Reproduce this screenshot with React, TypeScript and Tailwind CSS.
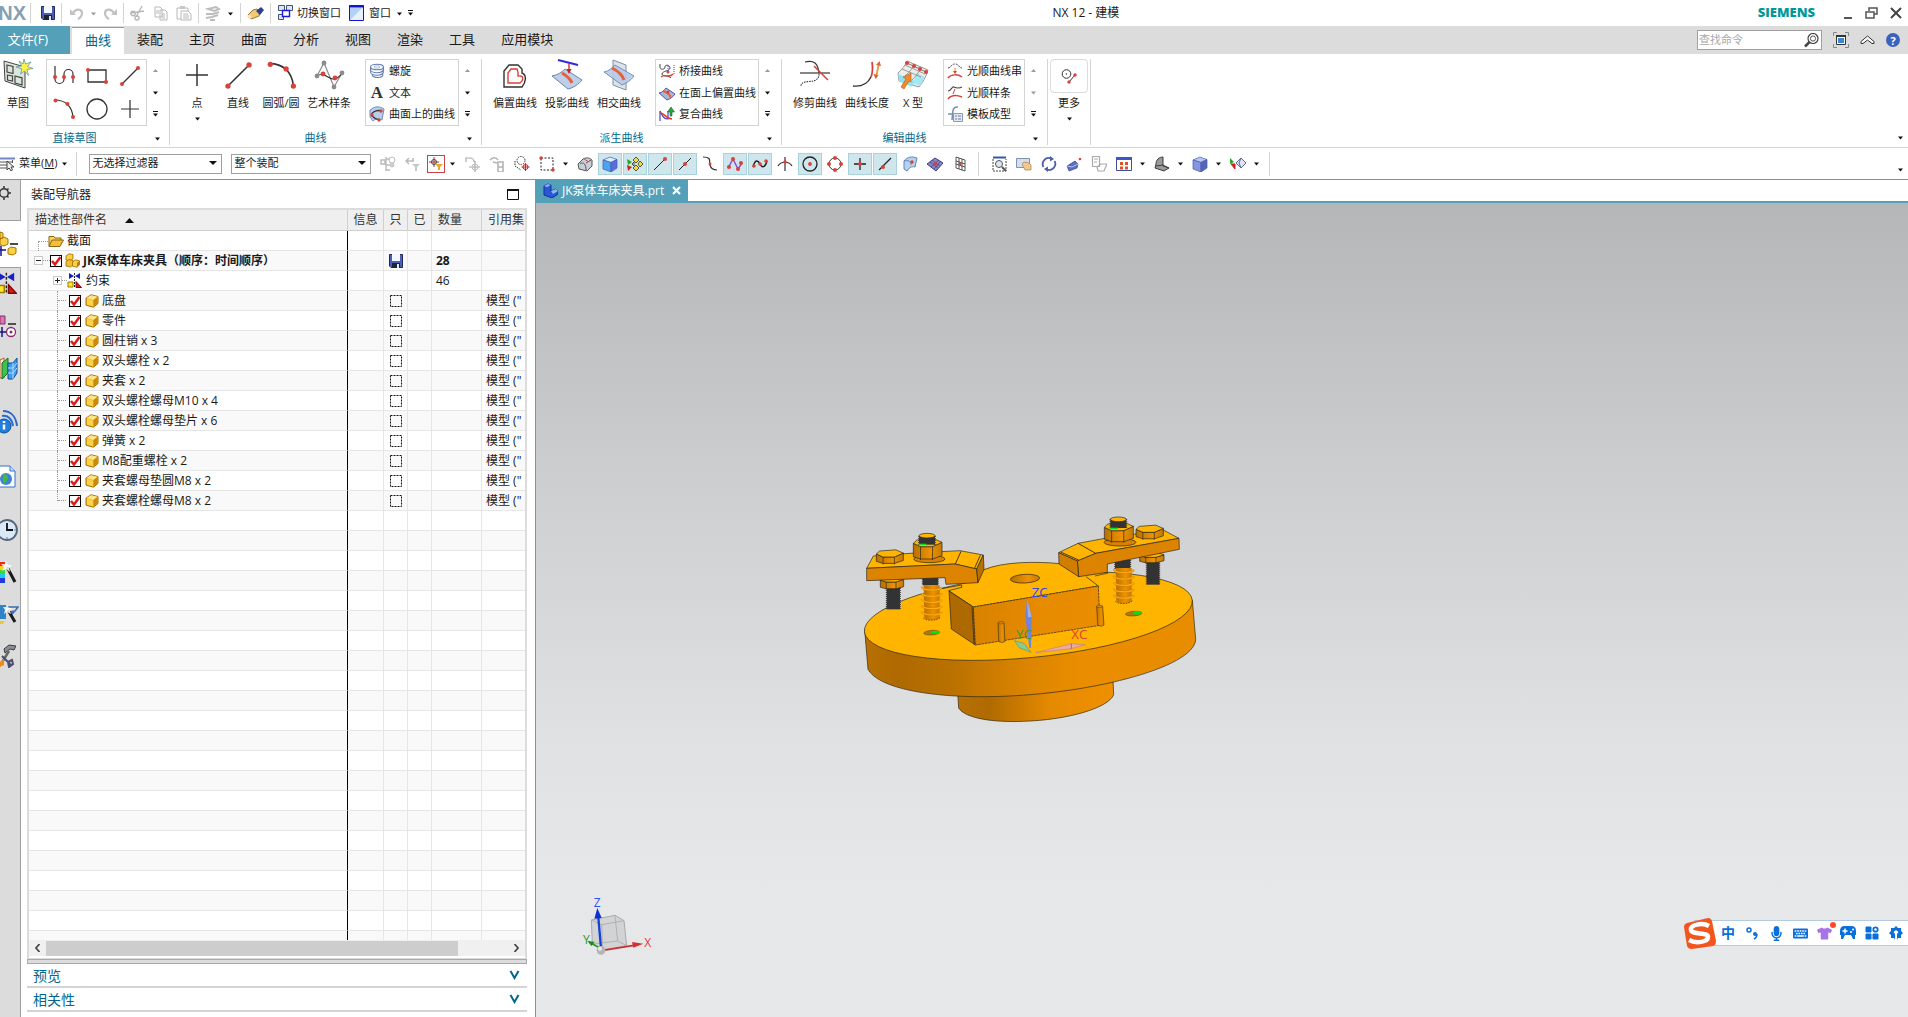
import React from 'react';
import { FaGamepad, FaKeyboard, FaMicrophone, FaTshirt } from 'react-icons/fa';

interface SvgProps {
  w?: number;
  h?: number;
  box?: string;
  className?: string;
  children: React.ReactNode;
}

const Svg: React.FC<SvgProps> = ({ w = 16, h = w, box, className = '', children }) => (
  <svg width={w} height={h} viewBox={box ?? `0 0 ${w} ${h}`} fill="none" className={`shrink-0 ${className}`}>
    {children}
  </svg>
);

const Dot: React.FC<{ x: number; y: number; r?: number; c?: string }> = ({ x, y, r = 2.4, c = '#d9423a' }) => (
  <circle cx={x} cy={y} r={r} fill={c} />
);

const Arrow: React.FC<{ up?: boolean; bar?: boolean; muted?: boolean }> = ({ up, bar, muted }) => (
  <Svg w={7} h={7}>
    {bar && <path d="M1 .5h5" stroke="#111" />}
    <path d={up ? 'M1 5h5L3.500 2z' : 'M1 2.500h5L3.500 5.500z'} fill={muted ? '#9a9a9a' : '#111'} />
  </Svg>
);

const Separator: React.FC<{ className?: string }> = ({ className = 'h-5' }) => (
  <div className={`w-px shrink-0 bg-[#d4d4d4] ${className}`} />
);

/* ---------- shared small drawings ---------- */

const SaveIcon = () => (
  <Svg w={14} h={14}>
    <path d="M.5.5h13v13H2l-1.500-1.500z" fill="#4a5fb4" stroke="#1f2a5c" />
    <path d="M3 0h8v7H3z" fill="#f4f7ff" />
    <path d="M3 9h8v5H3z" fill="#20242e" />
    <path d="M8 10h2v4H8z" fill="#dfe6f5" />
  </Svg>
);

const PartIcon = () => (
  <Svg w={14} h={14}>
    <path d="M1 4 6 .8l7 1.700v7L8.500 13.200l-7.500-2z" fill="#f2b91c" stroke="#a97305" />
    <path d="M1.500 4 6 1.300l6.500 1.500L8.500 6z" fill="#ffe58a" />
    <path d="M8.500 6l4-3v6.200l-4 3.500z" fill="#c98a0a" />
    <path d="M2 5l6 1.500v5.700l-6-1.600z" fill="#fbd24a" />
  </Svg>
);

const AssemblyIcon: React.FC<{ size?: number }> = ({ size = 15 }) => (
  <Svg w={size} box="0 0 15 15">
    <path d="M1 3 4 .8l4 .8v4L5.500 8 1 7z" fill="#fbcf45" stroke="#9c6c05" strokeWidth=".8" />
    <path d="M1 8.500 4 6.500l4 .8v4.500L5.500 14 1 13z" fill="#f5bd28" stroke="#9c6c05" strokeWidth=".8" />
    <path d="M7.500 9l3-2 4 .8v4L12 14.200l-4.500-1z" fill="#fbcf45" stroke="#9c6c05" strokeWidth=".8" />
    <path d="M12 10l2.500-2.200v4L12 14z" fill="#b97c08" />
  </Svg>
);

const ConstraintIcon: React.FC<{ w?: number; h?: number; box?: string }> = ({ w = 15, h = 15, box = '0 0 15 15' }) => (
  <Svg w={w} h={h} box={box}>
    <path d="M2 0l5 3-5 3zM13 0L8 3l5 3z" fill="#1a1ec4" />
    <path d="M7.500 0v15" stroke="#222" strokeDasharray="2 1" />
    <path d="M1 9h5v5H1z" fill="#ffe82e" stroke="#9a7a00" />
    <path d="M9 8.500l5.500 6H9z" fill="#d81818" stroke="#7c0b0b" />
  </Svg>
);

const FolderIcon = () => (
  <Svg w={16} h={14}>
    <path d="M1 12V2.500h5l1 1.500h6v2" fill="#f8d568" stroke="#8a6508" />
    <path d="M1 12.500 4 6h11.500L12 12.500z" fill="#f5be3c" stroke="#8a6508" />
  </Svg>
);

/* ---------- ribbon icons ---------- */

const SketchIcon = () => (
  <Svg w={32}>
    <path d="M2 2l21 6v21L3 22z" fill="#dde6dc" stroke="#444" />
    <path d="M5 6l6 1.500v7L5 13zM5.500 16l5 1v5l-5-1zM13 17l7 1.800V26l-7-2z" stroke="#444" strokeWidth="1.200" />
    <path d="M22 0l1.500 5L29 3l-3.500 4.500 5.500 2-6 1 1.500 6-4-4.500-4 3 1.500-5-6-2 5.500-1L17 2l4 3z" fill="#fff04a" stroke="#5d9ab0" strokeWidth=".8" />
  </Svg>
);

const ProfileIcon = () => (
  <Svg w={22}>
    <path d="M2 1v13a4.500 4.500 0 0 0 9 0V9a4.500 4.500 0 0 1 9 0v9" stroke="#333" strokeWidth="1.200" />
    <Dot x={2} y={12} r={2} /><Dot x={11} y={12} r={2} /><Dot x={20} y={12} r={2} />
  </Svg>
);
const RectIcon = () => (
  <Svg w={24} h={20}>
    <path d="M3 4h18v12H3z" stroke="#333" strokeWidth="1.300" />
    <Dot x={3} y={4} r={2} /><Dot x={21} y={16} r={2} />
  </Svg>
);
const LineIcon: React.FC<{ size?: number }> = ({ size = 22 }) => (
  <Svg w={size} box="0 0 22 22">
    <path d="M3 19L19 3" stroke="#333" strokeWidth="1.200" />
    <Dot x={3} y={19} r={2} /><Dot x={19} y={3} r={2} />
  </Svg>
);
const ArcIcon: React.FC<{ size?: number }> = ({ size = 22 }) => (
  <Svg w={size} box="0 0 22 22">
    <path d="M2 2c10 0 17 6 18 17" stroke="#333" strokeWidth="1.200" />
    <Dot x={2.500} y={2.500} r={2} /><Dot x={14.500} y={6} r={2} /><Dot x={20} y={19} r={2} />
  </Svg>
);
const CircleIcon = () => (
  <Svg w={22}><circle cx="11" cy="11" r="10" stroke="#333" strokeWidth="1.300" /></Svg>
);
const PlusIcon: React.FC<{ size?: number }> = ({ size = 18 }) => (
  <Svg w={size} box="0 0 22 22"><path d="M11 0v22M0 11h22" stroke="#333" strokeWidth="1.500" /></Svg>
);
const SplineIcon = () => (
  <Svg w={32}>
    <path d="M4 17L11 4l10 24 8-14" stroke="#8c8c8c" strokeWidth="1.200" />
    <path d="M4 17c7-5 12 4 17 3s6-3 8-6" stroke="#333" strokeWidth="1.100" />
    <Dot x={4} y={17} c="#8c8c8c" /><Dot x={11} y={4} c="#8c8c8c" /><Dot x={21} y={28} c="#8c8c8c" /><Dot x={29} y={14} c="#8c8c8c" />
    <Dot x={10} y={15} /><Dot x={22} y={19} />
  </Svg>
);
const HelixIcon = () => (
  <Svg>
    <g stroke="#6680b0" strokeWidth="1.100">
      <ellipse cx="8" cy="4" rx="6.500" ry="2.800" /><path d="M1.500 6c0 5 13 5 13 0M1.500 8.500c0 5 13 5 13 0M3 11.500c1 4 11 4 11 0" />
      <path d="M1.500 4v4.500M14.500 4v4.500" />
    </g>
    <ellipse cx="8" cy="4" rx="3" ry="1.200" stroke="#a9bbdc" />
  </Svg>
);
const SurfCurveIcon = () => (
  <Svg>
    <path d="M1 4C6 0 10 0 15 3l-2 11c-4-2-7-1-9 1L1 11z" fill="#b8cdea" stroke="#6f8fc0" />
    <path d="M13 5C6 3 1 8 3 10s4 3 7 4" stroke="#333" strokeWidth="1.300" />
    <Dot x={12} y={5} r={1.700} /><Dot x={3} y={9} r={1.700} /><Dot x={10} y={14} r={1.700} />
  </Svg>
);
const OffsetIcon = () => (
  <Svg w={32}>
    <path d="M5 28V12l5-6h9l4 4v4c5 2 4 9 0 14z" stroke="#333" strokeWidth="1.400" />
    <path d="M9 24V14l3-4h6l1 3v4c6-1 6 4 2 7z" stroke="#d9423a" strokeWidth="1.400" />
  </Svg>
);
const ProjectIcon = () => (
  <Svg w={32}>
    <path d="M1 17c6-1 10-4 13-7l17 11c-3 4-9 8-14 9z" fill="#bdcfe9" stroke="#6d84ad" />
    <path d="M11 14c5 3 8 5 10 10" stroke="#e8603a" strokeWidth="3" />
    <path d="M7 1l20 5" stroke="#2b2be0" strokeWidth="2" />
    <path d="M18 4v8" stroke="#d02020" strokeWidth="1.300" /><path d="M15.500 10h5L18 15z" fill="#d02020" />
  </Svg>
);
const IntersectIcon = () => (
  <Svg w={32}>
    <path d="M10 1l13 5v25l-13-5z" fill="#dde3ea" stroke="#7f8ea5" />
    <path d="M1 13c5-1 8-4 11-7l19 11c-3 4-7 7-12 9z" fill="#b5cbeb" stroke="#6d84ad" opacity=".9" />
    <path d="M9 9c6 3 10 6 12 12" stroke="#e8603a" strokeWidth="3" />
  </Svg>
);
const BridgeIcon = () => (
  <Svg>
    <path d="M1 1v3c0 3 5 3 5 0s5-2 5 1-8 3-8 6 7 1 9 4" stroke="#444" />
    <path d="M2 14c4-4 8 2 12-3" stroke="#d9423a" strokeWidth="1.300" />
    <path d="M9 3v6M15 2v10" stroke="#3b3bd8" strokeDasharray="1 1" /><Dot x={9} y={9} r={1.500} />
  </Svg>
);
const FaceOffsetIcon = () => (
  <Svg>
    <path d="M0 8c3 0 5-3 7-5l9 6c-2 3-5 5-8 6z" fill="#a7b7dc" stroke="#4d5f96" />
    <path d="M4 6c4 1 7 4 8 7" stroke="#e8603a" strokeWidth="2" /><Dot x={9} y={7} r={1.500} />
  </Svg>
);
const CompositeIcon = () => (
  <Svg>
    <path d="M1 15V5c3 6 4 8 8 8V5" stroke="#4444c8" strokeWidth="1.200" />
    <path d="M1 7c5 0 6 6 12 6" stroke="#e03a2a" strokeWidth="1.600" />
    <path d="M11 10V6H8.500L12 1l3.500 5H13v4z" fill="#2fa040" stroke="#14702a" strokeWidth=".6" />
  </Svg>
);
const TrimIcon = () => (
  <Svg w={32}>
    <path d="M6 3c9-2 13 1 14 11" stroke="#333" strokeWidth="1.200" /><path d="M1 14h30" stroke="#333" strokeWidth="1.200" />
    <path d="M20 15c0 8-8 7-14 8-3 1-4 2-4 4" stroke="#333" strokeWidth="1.100" strokeDasharray="1.500 1" />
    <path d="M15 7l14 14" stroke="#d9423a" strokeWidth="1.500" />
  </Svg>
);
const LengthIcon = () => (
  <Svg w={32}>
    <path d="M2 27c9 1 15-3 18-9" stroke="#333" strokeWidth="1.400" /><path d="M20 18c2-5 2-9 1-15" stroke="#d9423a" strokeWidth="1.800" />
    <path d="M28 4l-3 15" stroke="#e79a43" strokeWidth="1.800" />
    <path d="M25 6l3.500-4L30 7zM22.500 15l2 5 3-4z" fill="#d9683a" />
  </Svg>
);
const XFormIcon = () => (
  <Svg w={32}>
    <path d="M1 14C5 10 8 7 10 2l21 9c-2 7-5 12-9 17L2 22z" fill="#ececec" stroke="#999" />
    <path d="M1 15l17 7-3 6L2 22z" fill="#8fe3ee" /><path d="M20 14l8 4-5 9-7-3z" fill="#a6e8f0" />
    <path d="M5 10l19 8M8 6l20 9M17 5c-2 6-6 9-9 12M24 8c-2 6-6 10-9 13" stroke="#888" strokeWidth=".8" />
    <path d="M10 4l19 9" stroke="#777" />
    <Dot x={10} y={4} r={2} /><Dot x={17} y={7} r={2} /><Dot x={23} y={10} r={2} /><Dot x={29} y={13} r={2} />
    <path d="M4 28l5-8-3-2 8-4v9l-2-1-5 8z" fill="#f08a2c" stroke="#b35c12" strokeWidth=".6" />
  </Svg>
);
const SmoothStringIcon = () => (
  <Svg>
    <path d="M1 5c3 0 3-4 7-4s4 4 7 4" stroke="#444" strokeDasharray="2 1" /><path d="M8 5v5" stroke="#e28a2a" /><path d="M6 8h4l-2 3z" fill="#d9423a" />
    <path d="M1 15c3-4 10-4 14-1" stroke="#d9423a" strokeWidth="1.500" />
  </Svg>
);
const SmoothSplineIcon = () => (
  <Svg>
    <path d="M1 6c3 0 4-5 6-4s4 2 8 0" stroke="#444" strokeWidth="1.200" /><path d="M8 4L6 9" stroke="#d9423a" />
    <path d="M1 14c4-5 9-4 14-2" stroke="#d9423a" strokeWidth="1.500" />
  </Svg>
);
const TemplateIcon = () => (
  <Svg>
    <path d="M1 8h7M11 1C5 0 6 6 5 14" stroke="#7b8db0" strokeWidth="1.500" />
    <path d="M6.500 7.500h9v8h-9z" fill="#e4eaf3" stroke="#8a98b2" /><path d="M8 10h2M8 13h2M11 10h3M11 13h3" stroke="#6f7f9e" />
  </Svg>
);
const MoreIcon = () => (
  <Svg w={16}>
    <circle cx="5.500" cy="6" r="4.300" stroke="#333" /><circle cx="5.500" cy="6" r=".7" fill="#333" />
    <path d="M8 14l6-7" stroke="#333" /><Dot x={8} y={14} r={1.700} /><Dot x={14} y={7} r={1.700} />
  </Svg>
);

/* ---------- ribbon structure ---------- */

interface Command {
  label: string;
  icon: React.ReactNode;
  drop?: boolean;
  width?: string;
}

const BigButton: React.FC<Command> = ({ label, icon, drop, width = 'w-[52px]' }) => (
  <button className={`flex shrink-0 flex-col items-center whitespace-nowrap text-[11px] leading-4 ${width}`}>
    <span className="mb-1 flex h-8 items-center">{icon}</span>
    {label}
    {drop && <span className="mt-1"><Arrow /></span>}
  </button>
);

const ScrollArrows: React.FC<{ muted?: boolean }> = ({ muted }) => (
  <div className="flex w-4 flex-col items-center">
    <button aria-label="上翻" className="flex flex-1 items-center"><Arrow up muted /></button>
    <button aria-label="下翻" className="flex flex-1 items-center"><Arrow muted={muted} /></button>
    <button aria-label="展开" className="flex flex-1 items-center"><Arrow bar /></button>
  </div>
);

const ListBox: React.FC<{ items: Command[]; width: string }> = ({ items, width }) => (
  <div className={`ml-2.5 flex shrink-0 flex-col border border-[#d4d4d4] ${width}`}>
    {items.map((item) => (
      <button key={item.label} className="flex flex-1 items-center gap-1 whitespace-nowrap pl-[3px] text-[11px] leading-4">
        {item.icon}
        {item.label}
      </button>
    ))}
  </div>
);

const Group: React.FC<{ title: string; className?: string; children: React.ReactNode }> = ({ title, className = '', children }) => (
  <section className="flex h-[86px] shrink-0 flex-col border-r border-[#d4d4d4]">
    <div className={`flex h-[67px] shrink-0 ${className}`}>{children}</div>
    <div className="mt-1 flex shrink-0 items-center pr-1 text-[11px] leading-4 text-[#00688b]">
      <span className="flex-1 text-center">{title}</span>
      <span className="flex w-4 justify-center"><Arrow /></span>
    </div>
  </section>
);

const Ribbon = () => (
  <div className="flex h-[94px] shrink-0 items-start border-b border-[#d4d4d4] pt-[5px]">
    <Group title="直接草图" className="pr-1.5">
      <BigButton label="草图" icon={<SketchIcon />} width="w-9" />
      <div className="ml-2.5 grid grid-cols-3 border border-[#d4d4d4]">
        {[<ProfileIcon />, <RectIcon />, <LineIcon />, <ArcIcon />, <CircleIcon />, <PlusIcon />].map((icon, i) => (
          <button key={i} className="flex h-8 w-[33px] items-center justify-center">{icon}</button>
        ))}
      </div>
      <ScrollArrows />
    </Group>
    <Group title="曲线" className="pl-[7px] pr-1.5">
      <BigButton label="点" icon={<PlusIcon size={22} />} width="w-10" drop />
      <BigButton label="直线" icon={<LineIcon size={29} />} width="w-[42px]" />
      <BigButton label="圆弧/圆" icon={<ArcIcon size={29} />} width="w-11" />
      <BigButton label="艺术样条" icon={<SplineIcon />} />
      <ListBox
        width="w-[94px]"
        items={[
          { label: '螺旋', icon: <HelixIcon /> },
          { label: '文本', icon: <span className="w-4 text-center font-['Liberation_Serif',serif] text-[17px] font-bold text-[#333]">A</span> },
          { label: '曲面上的曲线', icon: <SurfCurveIcon /> },
        ]}
      />
      <ScrollArrows />
    </Group>
    <Group title="派生曲线" className="pl-[7px] pr-1.5">
      <BigButton label="偏置曲线" icon={<OffsetIcon />} />
      <BigButton label="投影曲线" icon={<ProjectIcon />} />
      <BigButton label="相交曲线" icon={<IntersectIcon />} />
      <ListBox
        width="w-[104px]"
        items={[
          { label: '桥接曲线', icon: <BridgeIcon /> },
          { label: '在面上偏置曲线', icon: <FaceOffsetIcon /> },
          { label: '复合曲线', icon: <CompositeIcon /> },
        ]}
      />
      <ScrollArrows />
    </Group>
    <Group title="编辑曲线" className="pl-[7px] pr-1.5">
      <BigButton label="修剪曲线" icon={<TrimIcon />} />
      <BigButton label="曲线长度" icon={<LengthIcon />} />
      <BigButton label="X 型" icon={<XFormIcon />} width="w-10" />
      <ListBox
        width="w-[82px]"
        items={[
          { label: '光顺曲线串', icon: <SmoothStringIcon /> },
          { label: '光顺样条', icon: <SmoothSplineIcon /> },
          { label: '模板成型', icon: <TemplateIcon /> },
        ]}
      />
      <ScrollArrows muted />
    </Group>
    <div className="flex h-[86px] flex-col items-center border-r border-[#d4d4d4] px-0.5 text-[11px] leading-4">
      <button className="flex flex-col items-center">
        <span className="mb-0.5 flex h-[34px] w-[38px] items-center justify-center rounded border border-[#dcdcdc]"><MoreIcon /></span>
        更多
        <span className="mt-1"><Arrow /></span>
      </button>
    </div>
    <button aria-label="功能区选项" className="ml-auto mr-1 mt-[75px]"><Arrow /></button>
  </div>
);

/* ---------- title and tabs ---------- */

const TitleBar = () => (
  <header className="flex h-[26px] shrink-0 items-center text-[11px]">
    <div className="flex w-[26px] shrink-0 justify-end overflow-hidden font-['Liberation_Sans',sans-serif] text-xl font-bold leading-6 text-[#86a0b4]">NX</div>
    <Separator className="ml-1 h-5" />
    <button aria-label="保存" className="ml-2.5"><SaveIcon /></button>
    <Separator className="ml-1.5 h-5" />
    <button aria-label="撤消" className="ml-2">
      <Svg w={14} h={13}><path d="M0 2v6h6z" fill="#c2c2c2" /><path d="M3 6c3-5 9-4 9 0 0 3-2 5-4 6" stroke="#c2c2c2" strokeWidth="2.200" /></Svg>
    </button>
    <span className="mx-1.5"><Arrow muted /></span>
    <button aria-label="重做">
      <Svg w={14} h={13}><path d="M14 2v6H8z" fill="#c2c2c2" /><path d="M11 6C8 1 2 2 2 6c0 3 2 5 4 6" stroke="#c2c2c2" strokeWidth="2.200" /></Svg>
    </button>
    <Separator className="ml-1.5 h-5" />
    <button aria-label="剪切" className="ml-1.5">
      <Svg>
        <path d="M1 8l13-2M12 1L6 12" stroke="#b8b8b8" strokeWidth="1.400" />
        <circle cx="3" cy="8.500" r="2.200" stroke="#b8b8b8" strokeWidth="1.400" /><circle cx="7" cy="13" r="2" stroke="#b8b8b8" strokeWidth="1.400" />
      </Svg>
    </button>
    <button aria-label="复制" className="ml-2">
      <Svg w={14} h={15}><path d="M1 1h5l2 2v8H1zM6 4h5l2 2v8H6z" fill="#fff" stroke="#b8b8b8" /><path d="M8 8h3M8 10h3M8 12h3M2 5h3M2 7h3" stroke="#b8b8b8" /></Svg>
    </button>
    <button aria-label="粘贴" className="ml-2">
      <Svg w={16} h={16}><path d="M1 3h11v11H1z" stroke="#b8b8b8" /><path d="M4 1h5v3H4z" fill="#c8c8c8" /><path d="M5 6h7l3 3v6H5z" fill="#fff" stroke="#b8b8b8" /><path d="M7 9h5M7 11h6M7 13h6" stroke="#b8b8b8" /></Svg>
    </button>
    <Separator className="ml-1.5 h-5" />
    <button aria-label="重复命令" className="ml-1.5">
      <Svg><path d="M3 4l8-2 3 2-5 2zM1 9h7l6-2M1 13l6-1 6-2M5 15h5" stroke="#bdbdbd" strokeWidth="2" /></Svg>
    </button>
    <span className="mx-1.5"><Arrow /></span>
    <Separator className="h-5" />
    <button aria-label="触控" className="ml-1.5">
      <Svg w={17} h={13}>
        <path d="M1 8l5-5 4-1 3 3-1 4-5 2-3 1z" fill="#efc878" stroke="#9c7530" />
        <path d="M9 4l5-4 3 3-4 5z" fill="#2f3f8f" /><path d="M0 9l3-2 2 4-3 1z" fill="#f7e3b4" />
      </Svg>
    </button>
    <Separator className="ml-1.5 h-5" />
    <button className="ml-1.5 flex items-center gap-1">
      <Svg>
        <path d="M1.500.5h6v5h-6zM9.500.5h6v5h-6zM1.500 9.500h5v5h-5z" fill="#dde6f4" stroke="#44546c" />
        <path d="M5.500 5.500h7v6h-7z" fill="#fff" stroke="#1818f0" strokeWidth="1.400" />
      </Svg>
      切换窗口
    </button>
    <button className="ml-2 flex items-center gap-[5px]">
      <Svg w={15} h={16}>
        <path d="M.5.5h14v15H.5z" fill="#e6f1fc" stroke="#1212dc" /><path d="M14 2L1 15V3h13z" fill="#9cc3ee" opacity=".7" /><path d="M0 1.500h15" stroke="#1212dc" strokeWidth="2" />
      </Svg>
      窗口
      <Arrow />
    </button>
    <button aria-label="更多工具" className="ml-1"><Arrow bar /></button>
    <h1 className="flex-1 text-center text-xs">NX 12 - 建模</h1>
    <div className="font-['Open_Sans',sans-serif] text-[13px] font-extrabold text-[#009999]">SIEMENS</div>
    <div className="ml-7 mr-1.5 flex items-center gap-3">
      <button aria-label="最小化"><Svg w={10} h={12}><path d="M1 11h8" stroke="#555" strokeWidth="2" /></Svg></button>
      <button aria-label="还原"><Svg w={13} h={12}><path d="M4 4V1h8v6H9M1 5h8v6H1z" stroke="#555" strokeWidth="1.500" /></Svg></button>
      <button aria-label="关闭"><Svg w={12}><path d="M1 1l10 10M11 1L1 11" stroke="#444" strokeWidth="2" /></Svg></button>
    </div>
  </header>
);

const tabs = ['装配', '主页', '曲面', '分析', '视图', '渲染', '工具', '应用模块'];

const TabBar = () => (
  <nav className="flex h-7 shrink-0 items-stretch bg-[#dcdcdc] text-[13px]">
    <button className="w-[70px] bg-[#54a0b8] pr-[14px] text-center text-white">文件(F)</button>
    <button className="ml-0.5 mt-px border-t border-[#9a9a9a] bg-white px-[13px] text-[#00688b]">曲线</button>
    {tabs.map((tab) => (
      <button key={tab} className="px-[13px]">{tab}</button>
    ))}
    <div className="ml-auto mr-2 flex items-center gap-[11px]">
      <label className="flex h-5 w-[125px] items-center border border-[#a0a0a0] bg-white pl-px pr-0.5">
        <input aria-label="查找命令" placeholder="查找命令" className="w-0 flex-1 text-[11px] outline-none placeholder:text-[#a8a8a8]" />
        <Svg w={15}>
          <circle cx="9" cy="5.500" r="5" stroke="#444" strokeWidth="1.200" /><circle cx="9" cy="5.500" r="2.600" stroke="#555" />
          <path d="M5.500 9L1 13.500" stroke="#444" strokeWidth="2.500" />
        </Svg>
      </label>
      <button aria-label="全屏">
        <Svg w={16}>
          <path d="M.5 4V.5H4M12 .5h3.500V4M15.500 12v3.500H12M4 15.500H.5V12" stroke="#888" />
          <path d="M3.500 3.500h9v9h-9z" fill="#fff" stroke="#333" /><path d="M3 4h10" stroke="#333" strokeWidth="2" /><path d="M5 6h6v5H5z" fill="#3a86d8" />
        </Svg>
      </button>
      <button aria-label="折叠功能区">
        <Svg w={15} h={12}><path d="M1 9.500v-2L7.500 2 14 7.500v2h-2L7.500 6 3 9.500z" fill="#fff" stroke="#333" /></Svg>
      </button>
      <button aria-label="帮助" className="flex h-[14px] w-[14px] items-center justify-center rounded-full bg-[#3d62bd] text-[11px] font-bold leading-none text-white">?</button>
    </div>
  </nav>
);

/* ---------- selection bar ---------- */

interface Tool {
  icon?: React.ReactNode;
  on?: boolean;
  arrow?: boolean;
  boxed?: boolean;
}

const Cube: React.FC<{ top: string; left: string; right: string }> = ({ top, left, right }) => (
  <Svg>
    <path d="M1 4l7-3 7 2.500-6 3z" fill={top} stroke="#4b5aa8" strokeWidth=".7" />
    <path d="M1 4l8 2.500V16l-8-3z" fill={left} stroke="#4b5aa8" strokeWidth=".7" />
    <path d="M9 6.500l6-3V12l-6 4z" fill={right} stroke="#4b5aa8" strokeWidth=".7" />
  </Svg>
);

const snapTools: Tool[] = [
  { icon: <Svg><path d="M6 1v14M1 4h4v4H1zM6 3h4M6 9h5M6 14h4" stroke="#bbb" strokeWidth="1.400" /><circle cx="12" cy="4" r="3" stroke="#bbb" /><circle cx="12" cy="9" r="2.500" fill="#ccc" /></Svg> },
  { icon: <Svg><path d="M1 5h8M4 2L1 5l3 3M8 5V2" stroke="#bbb" strokeWidth="1.500" /><path d="M7 8h8l-3 3v4h-2v-4z" fill="#c8c8c8" /></Svg> },
  { boxed: true, icon: <Svg w={14}><path d="M5 0v10M0 5h10" stroke="#a03030" /><circle cx="5" cy="5" r="2.500" stroke="#444" /><path d="M6 7h8l-3 3v3H9v-3z" fill="#e8a82a" /></Svg> },
  { arrow: true },
  { icon: <Svg><path d="M2 6V2h4a4 4 0 0 1 4 4M11 5v11M5 11h11" stroke="#aaa" strokeWidth="1.200" /><circle cx="11" cy="11" r="3" stroke="#bbb" /></Svg> },
  { icon: <Svg><path d="M1 4c3-3 6-3 8 0M4 6l4 1M9 6h5v10H9zM9 11h5" stroke="#b4b4b4" strokeWidth="1.600" /></Svg> },
  { icon: <Svg><circle cx="7" cy="4.500" r="4" stroke="#333" strokeDasharray="1.500 1" /><path d="M1 5v5l6 4" stroke="#333" strokeDasharray="1.500 1" /><path d="M11.500 7v8M7.500 11h8" stroke="#c22" /><circle cx="11.500" cy="11" r="2.500" stroke="#c22" /></Svg> },
  { icon: <Svg><path d="M2 2h12v12H2z" stroke="#222" strokeDasharray="2 1.500" /><Dot x={2} y={2} r={1.700} /><Dot x={14} y={14} r={1.700} /></Svg> },
  { arrow: true },
  { icon: <Svg><path d="M1 8l5-5c4-2 7-1 9 1v6l-5 5-8-2z" fill="#c9ced8" stroke="#555" /><path d="M3 8c4-3 6 1 6 6M9 7l5-3" stroke="#555" /><path d="M7 3l5 3" stroke="#d55" /></Svg> },
  { on: true, icon: <Cube top="#d8f0ff" left="#4aa4f0" right="#5a6ee0" /> },
  { on: true, icon: <Svg><path d="M0 3l5 3-4 3z" fill="#2a2" /><path d="M0 9l5 2-4 4z" fill="#c22" /><path d="M9 1l3 3-3 3-3-3zM9 9l3 3-3 3-3-3zM5 8l2-2v4zM13 5l3 3-3 3-2-3z" fill="#f2dc3c" stroke="#333" strokeWidth=".8" /></Svg> },
  { on: true, icon: <Svg><path d="M2 14L13 3" stroke="#222" /><Dot x={13} y={3} r={2} /></Svg> },
  { on: true, icon: <Svg><path d="M2 14L14 2" stroke="#222" /><Dot x={8} y={8} r={2} /></Svg> },
  { icon: <Svg><path d="M1 1c9 0 6 4 7 8s3 5 7 5" stroke="#333" strokeWidth="1.200" /><Dot x={8} y={8} r={1.500} /></Svg> },
  { on: true, icon: <Svg><path d="M1 12L6 3l5 10 4-6" stroke="#8a4bd0" strokeWidth="1.500" /><Dot x={2} y={11} r={2} /><Dot x={6} y={3} r={2} /><Dot x={11} y={13} r={2} /><Dot x={14} y={7} r={2} /></Svg> },
  { on: true, icon: <Svg><path d="M1 11C3 3 6 4 8 8s5 4 7-3" stroke="#222" strokeWidth="1.500" /><Dot x={2} y={10} r={1.800} /><Dot x={8} y={8} r={1.800} /><Dot x={14} y={5} r={1.800} /></Svg> },
  { icon: <Svg><path d="M8 1v14M1 10c3-5 11-5 14 0" stroke="#333" strokeWidth="1.200" /><Dot x={8} y={6} r={1.800} /></Svg> },
  { on: true, icon: <Svg><circle cx="8" cy="8" r="7" stroke="#222" strokeWidth="1.300" /><Dot x={8} y={8} r={1.900} /></Svg> },
  { icon: <Svg><circle cx="8" cy="8" r="6" stroke="#333" /><Dot x={8} y={2} r={2} /><Dot x={8} y={14} r={2} /><Dot x={2} y={8} r={2} /><Dot x={14} y={8} r={2} /></Svg> },
  { on: true, icon: <Svg><path d="M8 2v12M2 8h12" stroke="#222" strokeWidth="1.300" /><Dot x={8} y={8} r={1.900} /></Svg> },
  { on: true, icon: <Svg><path d="M2 14L14 2" stroke="#222" strokeWidth="1.200" /><Dot x={6} y={11} r={2} /></Svg> },
  { icon: <Svg><path d="M2 5c3-4 8-5 13-3l-2 9c-4-1-6 1-8 4L2 13z" fill="#b6d2ef" stroke="#5f83b8" /><path d="M2 5c4-1 7 0 7 4" stroke="#5f83b8" /><Dot x={10} y={6} r={1.700} /></Svg> },
  { icon: <Svg><path d="M0 8l8-6 8 5-7 8z" fill="#8a86c4" stroke="#443f80" /><path d="M3 6l8 6M5 4l8 6M4 11l8-7M7 13l7-8" stroke="#443f80" strokeWidth=".7" /><Dot x={8} y={8} r={1.800} /></Svg> },
  { icon: <Svg><path d="M4 1l9 3v11l-9-3zM7 2v11M10 3v11M4 5l9 3M4 8l9 3" stroke="#444" strokeWidth=".9" /><Dot x={8} y={8} r={1.500} /></Svg> },
];

const viewTools: Tool[] = [
  { icon: <Svg><path d="M2 1.500h13" stroke="#3b56a8" strokeWidth="2" /><path d="M2 3v12h13V3" stroke="#444" strokeDasharray="2 1" /><circle cx="8" cy="8" r="3.500" fill="#dfe8f2" stroke="#555" /><path d="M11 11l4 4" stroke="#555" strokeWidth="2" /></Svg> },
  { icon: <Svg><path d="M.5 2.500h13v9H.5z" fill="#d7deeb" stroke="#8290b0" /><path d="M6 8l2-2 5 1 2 2v5H9z" fill="#f0c896" stroke="#a87c48" strokeWidth=".7" /></Svg> },
  { icon: <Svg><path d="M2.500 11A6 6 0 0 1 10 2.500M13.500 5A6 6 0 0 1 6 13.500" stroke="#4c5fa8" strokeWidth="1.800" /><path d="M9 0l4 3-4 2.500zM7 10.500L3 13l4 3z" fill="#4c5fa8" /></Svg> },
  { icon: <Svg><path d="M1 10l8-5 3 3-1 4-8 3z" fill="#5b6fc4" stroke="#34448c" strokeWidth=".7" /><path d="M1 10l5 1 6-3" stroke="#b5c0ee" /><Dot x={14} y={3} r={1.300} /></Svg> },
  { icon: <Svg><path d="M1.500.5h7v10h-7zM3 3h4M3 6h3M6 11l4-3h6l-3 7H7z" stroke="#aaa" strokeWidth="1.200" /></Svg> },
  { icon: <Svg><path d="M.5 1.500h15v13H.5z" fill="#fff" stroke="#3b4f9c" /><path d="M0 2.500h16" stroke="#3b56c8" strokeWidth="3" /><path d="M4 6h3v3H4zM9 6h3v3H9zM4 10.500h3v3H4zM9 10.500h3v3H9z" fill="#e0512e" /></Svg> },
  { arrow: true },
  { icon: <Svg><path d="M2 8c0-4 3-7 7-7v9l6 2-5 3-9-3z" fill="#9a9a9a" stroke="#3c3c3c" /><path d="M2 10l7-1 6 3" stroke="#3c3c3c" /></Svg> },
  { arrow: true },
  { icon: <Cube top="#b9c6f4" left="#8396e2" right="#5266bc" /> },
  { arrow: true },
  { icon: <Svg><path d="M0 2l4 4-4 2z" fill="#2a2" /><path d="M1 8h4v5z" fill="#c22" stroke="#c22" /><path d="M11 2l5 5-5 5-5-5z" fill="#dfe4f2" stroke="#5b6a98" /><path d="M11 2l-2 5 2 5" stroke="#5b6a98" /></Svg> },
  { arrow: true },
];

const ToolRow: React.FC<{ items: Tool[] }> = ({ items }) => (
  <div className="flex items-center">
    {items.map((tool, i) => {
      if (tool.arrow) return <button key={i} aria-label="选项" className="flex w-[13px] justify-center"><Arrow /></button>;
      if (tool.boxed) return <button key={i} className="flex h-4 w-[21px] items-center justify-center"><span className="border border-[#c8404a] p-px">{tool.icon}</span></button>;
      return (
        <button key={i} className="flex w-[25px] justify-center">
          <span className={tool.on ? 'flex h-[22px] w-6 items-center justify-center border border-[#a9d3dc] bg-[#cfe7ec]' : 'flex h-[22px] w-6 items-center justify-center'}>{tool.icon}</span>
        </button>
      );
    })}
  </div>
);

const Picker: React.FC<{ label: string; width: string }> = ({ label, width }) => (
  <div className={`grid h-5 shrink-0 items-center ${width}`}>
    <select aria-label={label} className="col-start-1 row-start-1 h-5 w-full appearance-none border border-[#a0a0a0] bg-white pl-0.5 text-[11px] outline-none">
      <option>{label}</option>
    </select>
    <Svg w={8} h={5} className="pointer-events-none col-start-1 row-start-1 mr-[5px] justify-self-end"><path d="M0 0h8L4 4z" fill="#111" /></Svg>
  </div>
);

const SelectionBar = () => (
  <div className="flex h-8 shrink-0 items-center border-b border-[#8a9092] text-[11px]">
    <button className="flex items-center gap-1">
      <Svg w={15} h={14}>
        <path d="M0 1.500h15" stroke="#6f86c8" strokeWidth="2" /><path d="M0 5h12M0 8h7M0 11h7M12.500 3v3" stroke="#555" />
        <path d="M7 4v9l2-2 2 3 1.500-1-1.500-3h3z" fill="#eee" stroke="#444" />
      </Svg>
      <span>菜单(<u>M</u>)</span>
      <Arrow />
    </button>
    <Separator className="ml-2 mr-3 h-6" />
    <Picker label="无选择过滤器" width="w-[133px]" />
    <div className="ml-[9px] mr-1 flex"><Picker label="整个装配" width="w-[140px]" /></div>
    <ToolRow items={snapTools} />
    <Separator className="ml-1.5 mr-[7px] h-6" />
    <ToolRow items={viewTools} />
    <Separator className="ml-1.5 h-6" />
    <button aria-label="工具条选项" className="ml-auto mr-1 self-end pb-1.5"><Arrow /></button>
  </div>
);

/* ---------- resource rail ---------- */

const Rail = () => (
  <aside className="flex w-[21px] shrink-0 flex-col bg-[#dcdcdc]">
    <button aria-label="设置" className="flex h-[41px] items-center border-b border-r border-[#a0a0a0] pb-[14px]">
      <Svg w={11} h={14}><circle cx="4" cy="7" r="4.300" stroke="#333" strokeWidth="1.500" /><path d="M4 0v2M4 12v2M8.500 2.500L7 4M8.500 11.500L7 10M9 7h2" stroke="#333" strokeWidth="1.500" /></Svg>
    </button>
    <button aria-label="装配导航器" className="flex h-[46px] items-center bg-white">
      <Svg w={19} h={26}>
        <path d="M0 1l3 1v5l-3 1zM0 8l4-2 4 2v5l-4 2-4-1z" fill="#fbcf45" stroke="#a97305" /><path d="M10 13h8" stroke="#111" strokeWidth="1.500" /><path d="M0 19h6M1 15v10" stroke="#14148c" strokeWidth="1.500" />
        <path d="M8 18l3-2 5 1v5l-3 2-5-1z" fill="#fbcf45" stroke="#a97305" />
      </Svg>
    </button>
    <div className="flex flex-1 flex-col border-r border-t border-[#a0a0a0]">
      <button aria-label="约束导航器" className="flex h-8 items-center"><ConstraintIcon w={17} h={24} box="3 0 12 16" /></button>
      <button aria-label="部件导航器" className="mt-2.5 flex h-8 items-center">
        <Svg w={17} h={24}>
          <path d="M0 2h5v8H0z" fill="#d67ab4" stroke="#8c2a6c" /><path d="M8 10h8" stroke="#222" strokeWidth="1.500" /><path d="M0 18h6M2 13v10" stroke="#14148c" strokeWidth="1.500" />
          <circle cx="11" cy="18" r="4.500" fill="#fff" stroke="#8c2a6c" strokeWidth="1.300" /><circle cx="11" cy="18" r="1.500" fill="#8c2a6c" />
        </Svg>
      </button>
      <button aria-label="重用库" className="mt-2.5 flex h-8 items-center">
        <Svg w={18} h={23}>
          <path d="M0 3l4-2v20H0z" fill="#f6f0e2" stroke="#c05a1c" /><path d="M2 6l6-5v15l-6 6z" fill="#3fc24c" stroke="#17702a" /><path d="M8 6h5l4-5v15l-4 6H8z" fill="#3c9cf0" stroke="#124d94" /><path d="M8 11h5l4-5M8 16h5l4-5M13 6v16" stroke="#b4dcff" />
        </Svg>
      </button>
      <button aria-label="HD3D 工具" className="mt-[22px] flex h-8 items-center">
        <Svg w={18} h={24}>
          <circle cx="4" cy="16" r="7" fill="#1f7fdc" stroke="#0c4ea0" /><path d="M4 11v2M4 14.500v5" stroke="#fff" strokeWidth="2.500" />
          <path d="M2 6c6-1 10 3 11 10M3 1c8 0 13 6 14 15" stroke="#2c6ac8" strokeWidth="2" />
        </Svg>
      </button>
      <button aria-label="Web 浏览器" className="mt-[22px] flex h-8 items-center">
        <Svg w={16} h={23}><path d="M-2 1h12l5 5v16H-2z" fill="#fff" stroke="#3272c8" /><path d="M10 1v5h5" fill="#cfe0f6" stroke="#3272c8" /><circle cx="6" cy="14" r="6" fill="#3c82d8" /><path d="M4 9c4 1 5 3 3 6l-2 4c-3-3-3-7-1-10z" fill="#48b83c" /></Svg>
      </button>
      <button aria-label="历史记录" className="mt-[22px] flex h-8 items-center">
        <Svg w={18} h={22}><circle cx="7" cy="11" r="10" fill="#dbe8f8" stroke="#55657c" strokeWidth="1.800" /><path d="M7 4v7h6" stroke="#111" strokeWidth="1.800" /><path d="M7 18.500v1M14.500 11h1" stroke="#111" /></Svg>
      </button>
      <button aria-label="系统材料" className="mt-2.5 flex h-8 items-center">
        <Svg w={17} h={22}><path d="M0 1h5v4H0z" fill="#f02a1a" /><path d="M0 5h5v4H0z" fill="#f8d21a" /><path d="M0 9h5v4H0z" fill="#38d838" /><path d="M0 13h5v4H0z" fill="#22c8e8" /><path d="M0 17h5v5H0z" fill="#2238e0" /><path d="M7 6l8 15" stroke="#1a1a1a" strokeWidth="3" /><path d="M6 0l2 4 4 0-3 3 1 4-4-3-4 2 2-4-3-3h4z" fill="#fff" opacity=".85" /></Svg>
      </button>
      <button aria-label="流程模板" className="mt-2.5 flex h-8 items-center">
        <Svg w={19} h={22}><path d="M0 2h6v14H0z" fill="#2f84c8" /><path d="M6 4h12l-3 4-6 1h5l-4 4" stroke="#3c6cb4" strokeWidth="1.500" /><path d="M8 7l7 12" stroke="#1a1a1a" strokeWidth="3" /><path d="M7 2l2 3 3 0-2 3 1 3-4-2-3 2 1-4-2-3h3z" fill="#fff" opacity=".85" /><path d="M0 18h5l-2 3H0z" fill="#f0c82a" /></Svg>
      </button>
      <button aria-label="角色" className="mt-2.5 flex h-8 items-center">
        <Svg w={16} h={24}><path d="M4 5l5-4 7 1-2 4-4-1-5 4z" fill="#8a8f96" stroke="#3c3c3c" /><path d="M9 7L1 20" stroke="#666" strokeWidth="2.500" /><path d="M2 12l9 9M8 18l4-2 1 4-4 3z" stroke="#4a4f70" strokeWidth="2" /><path d="M0 18l4-3v6l-4 2z" fill="#f08a1a" /></Svg>
      </button>
    </div>
  </aside>
);

/* ---------- assembly navigator ---------- */

const parts = [
  '底盘', '零件', '圆柱销 x 3', '双头螺栓 x 2', '夹套 x 2', '双头螺栓螺母M10 x 4', '双头螺栓螺母垫片 x 6',
  '弹簧 x 2', 'M8配重螺栓 x 2', '夹套螺母垫圆M8 x 2', '夹套螺栓螺母M8 x 2',
];

const Check: React.FC<{ name: string }> = ({ name }) => (
  <label className="grid h-3 w-3 shrink-0 place-items-center">
    <input type="checkbox" aria-label={name} defaultChecked className="col-start-1 row-start-1 h-3 w-3 appearance-none border border-black bg-white" />
    <Svg w={12} className="pointer-events-none col-start-1 row-start-1"><path d="M2 6l3 3.500L10.500 2" stroke="#e01818" strokeWidth="2.500" /></Svg>
  </label>
);

const Expander: React.FC<{ open?: boolean }> = ({ open }) => (
  <button aria-label={open ? '折叠' : '展开'} className="flex h-[9px] w-[9px] shrink-0 items-center justify-center border border-[#c8c8c8] bg-white">
    <Svg w={5}><path d={open ? 'M0 2.500h5' : 'M0 2.500h5M2.500 0v5'} stroke="#222" /></Svg>
  </button>
);

const cell = 'border-b border-r border-[#e6e6e6]';

const Row: React.FC<{ name?: React.ReactNode; only?: React.ReactNode; count?: React.ReactNode; refSet?: string }> = ({ name, only, count, refSet }) => (
  <tr className="h-5 odd:bg-white even:bg-[#f9f9f9]">
    <td className="border-b border-r border-b-[#e6e6e6] border-r-black"><div className="flex h-[19px] items-center whitespace-nowrap">{name}</div></td>
    <td className={cell} />
    <td className={cell}><div className="flex justify-center">{only}</div></td>
    <td className={cell} />
    <td className={`pl-1 ${cell}`}>{count}</td>
    <td className="overflow-hidden whitespace-nowrap border-b border-[#e6e6e6] pl-1">{refSet}</td>
  </tr>
);

const NavigatorTable = () => (
  <table className="w-full table-fixed border-separate border-spacing-0 text-xs leading-[18px]">
    <colgroup>
      <col /><col className="w-9" /><col className="w-6" /><col className="w-6" /><col className="w-[50px]" /><col className="w-[43px]" />
    </colgroup>
    <thead>
      <tr className="h-[21px] bg-[#efefef] text-left text-[#333] [&>th]:border-b [&>th]:border-r [&>th]:border-[#cfcfcf] [&>th]:font-normal">
        <th><span className="flex items-center gap-[18px] pl-1.5">描述性部件名 <Svg w={9} h={5}><path d="M0 5h9L4.500 0z" fill="#111" /></Svg></span></th>
        <th className="text-center!">信息</th>
        <th className="text-center!">只</th>
        <th className="text-center!">已</th>
        <th className="pl-1.5">数量</th>
        <th className="overflow-hidden whitespace-nowrap border-r-0! pl-1.5">引用集</th>
      </tr>
    </thead>
    <tbody>
      <Row name={<><span className="ml-[9px] mt-2.5 h-2.5 w-2.5 border-l border-t border-dotted border-[#999]" /><FolderIcon /><span className="ml-[3px]">截面</span></>} />
      <Row
        name={
          <>
            <span className="ml-[5px] flex"><Expander open /></span>
            <span className="w-[7px] border-t border-dotted border-[#999]" />
            <Check name="JK泵体车床夹具" />
            <span className="mx-[3px]"><AssemblyIcon /></span>
            <b>JK泵体车床夹具（顺序：时间顺序）</b>
          </>
        }
        only={<SaveIcon />}
        count={<b>28</b>}
      />
      <Row
        name={
          <>
            <span className="ml-6 flex"><Expander /></span>
            <span className="w-[5px] border-t border-dotted border-[#999]" />
            <ConstraintIcon />
            <span className="ml-1">约束</span>
          </>
        }
        count="46"
      />
      {parts.map((part, i) => (
        <Row
          key={part}
          name={
            <>
              <span className={`ml-7 w-px border-l border-dotted border-[#999] ${i === parts.length - 1 ? 'h-2.5 self-start' : 'h-5'}`} />
              <span className="mr-[3px] w-2 border-t border-dotted border-[#999]" />
              <Check name={part} />
              <span className="ml-1 mr-[3px]"><PartIcon /></span>
              {part}
            </>
          }
          only={
            <Svg w={12}><path d="M.5.5h11v11H.5z" stroke="#111" strokeDasharray="2 1" /></Svg>
          }
          refSet={'模型 ("'}
        />
      ))}
      {Array.from({ length: 22 }, (_, i) => <Row key={i} />)}
    </tbody>
  </table>
);

const Fold: React.FC<{ title: string }> = ({ title }) => (
  <button className="flex h-6 w-full shrink-0 items-center justify-between border-b-2 border-[#d4d4d4] pl-1.5 pr-[7px] text-sm leading-5 text-[#00688b]">
    <span className="pt-0.5">{title}</span>
    <Svg w={11} h={10}><path d="M1.500 1L5.500 8l4-7" stroke="#00688b" strokeWidth="2" /></Svg>
  </button>
);

const Navigator = () => (
  <section className="flex w-[515px] shrink-0 flex-col border-r border-[#8a9092] pl-1.5 pr-2">
    <div className="flex h-7 shrink-0 items-center justify-between pl-1 pr-2 pt-px text-xs">
      <h2>装配导航器</h2>
      <button aria-label="最大化"><Svg w={12} h={11}><path d="M.5.5h11v10H.5z" stroke="#111" /><path d="M0 1h12" stroke="#111" strokeWidth="2" /></Svg></button>
    </div>
    <div className="flex min-h-0 flex-1 flex-col border-2 border-b border-[#dcdcdc] pb-0.5">
      <div className="min-h-0 flex-1 overflow-hidden"><NavigatorTable /></div>
      <div className="flex h-4 shrink-0 items-center bg-[#f0f0f0]">
        <button aria-label="向左" className="flex w-[17px] justify-center"><Svg w={7} h={8}><path d="M5.500 0L2 4l3.500 4" stroke="#444" strokeWidth="1.700" /></Svg></button>
        <div className="h-[15px] w-[412px] bg-[#cdcdcd]" />
        <button aria-label="向右" className="ml-auto flex w-[17px] justify-center"><Svg w={7} h={8}><path d="M1.500 0L5 4 1.500 8" stroke="#444" strokeWidth="1.700" /></Svg></button>
      </div>
    </div>
    <div className="h-[5px] shrink-0 border border-[#a8a8a8] bg-[#dcdcdc]" />
    <Fold title="预览" />
    <Fold title="相关性" />
    <div className="h-[5px] shrink-0" />
  </section>
);

/* ---------- 3D model ---------- */

const Bolt: React.FC<{ x: number; y: number; w: number; h: number }> = ({ x, y, w, h }) => (
  <g>
    <rect x={x} y={y} width={w} height={h} fill="#333" />
    <path d={`M${x} ${y + 2}v${h - 2}M${x + w} ${y + 2}v${h - 2}`} stroke="#3a3a3a" strokeWidth="5" strokeDasharray="3 3" />
  </g>
);

const Hex: React.FC<{ x: number; y: number; w: number; h: number; top: number }> = ({ x, y, w, h, top }) => (
  <g stroke="#222" strokeWidth="2" strokeLinejoin="round">
    <path d={`M${x} ${y}l${w * 0.25} ${top}h${w * 0.42}L${x + w} ${y - top * 0.3}v${h}l${-w * 0.33} ${top}h${-w * 0.42}L${x} ${y + h}z`} fill="url(#nut)" />
    <path d={`M${x} ${y}l${w * 0.12} ${-top}l${w * 0.6} ${-top * 0.4}L${x + w} ${y - top * 0.3}l${-w * 0.33} ${top * 1.3}h${-w * 0.42}z`} fill="#ffb400" />
    <path d={`M${x + w * 0.25} ${y + top}v${h}M${x + w * 0.67} ${y + top}v${h}`} />
  </g>
);

const Spring: React.FC<{ x: number; y: number; h: number }> = ({ x, y, h }) => (
  <g>
    <path d={`M${x} ${y}h48v${h}c-10 8-38 8-46 0z`} fill="url(#nut)" />
    {[0, 1, 2, 3, 4].map((i) => {
      const cy = y + 4 + (i * (h - 14)) / 4.500;
      return (
        <g key={i}>
          <path d={`M${x - 5} ${cy}c0 12 50 14 60 2`} stroke="#c47a00" strokeWidth="6" />
          <path d={`M${x - 5} ${cy}c0 12 50 14 60 2`} stroke="#ffab10" strokeWidth="4" />
        </g>
      );
    })}
    <path d={`M${x - 1} ${y + h}c8 9 42 9 52-3`} stroke="#222" strokeWidth="2" strokeDasharray="5 3" />
  </g>
);

const Fixture = () => (
  <svg width="360" height="240" viewBox="0 0 1080 720" fill="none" className="absolute left-[314px] top-[297px]">
    <defs>
      <linearGradient id="side" gradientUnits="userSpaceOnUse" x1="44" y1="0" x2="1036" y2="0">
        <stop offset="0" stopColor="#b87000" /><stop offset=".1" stopColor="#ae6900" /><stop offset=".25" stopColor="#b87000" />
        <stop offset=".5" stopColor="#dd8500" /><stop offset=".65" stopColor="#ea8d00" /><stop offset="1" stopColor="#e88c00" />
      </linearGradient>
      <linearGradient id="hub" gradientUnits="userSpaceOnUse" x1="323" y1="0" x2="791" y2="0">
        <stop offset="0" stopColor="#b87000" /><stop offset=".2" stopColor="#b06a00" /><stop offset=".6" stopColor="#e68a00" /><stop offset="1" stopColor="#ee9000" />
      </linearGradient>
      <linearGradient id="front" x1="0" x2="1"><stop stopColor="#d88200" /><stop offset=".5" stopColor="#e68a00" /><stop offset="1" stopColor="#ea8d00" /></linearGradient>
      <linearGradient id="nut" x1="0" x2="1"><stop stopColor="#b87000" /><stop offset=".6" stopColor="#ee9200" /><stop offset="1" stopColor="#c67a00" /></linearGradient>
    </defs>
    <g stroke="#2a2416" strokeWidth="2">
      <path d="M323 580L326 624C345 655 430 668 520 664C650 660 775 625 791 584L789 540z" fill="url(#hub)" />
      <path d="M44 390L54 508C85 565 240 592 410 590C700 588 1035 505 1037 418L1027 300z" fill="url(#side)" />
      <ellipse cx="535" cy="348" rx="494" ry="125" transform="rotate(-5.500 535 348)" fill="#ffb400" />
    </g>
    <path d="M296 272L335 262L400 208C460 184 560 184 625 190L708 230L745 258L370 321z" fill="#ffb400" />
    <path d="M400 210C460 184 560 184 630 191M335 262L296 272L370 321L745 258L708 230M275 266L335 255V264M735 228L775 219" stroke="#222" strokeWidth="2" />
    <path d="M297 273L370 321L376 435L304 387z" fill="#ae6900" stroke="#222" strokeWidth="2" />
    <path d="M370 321L745 258L750 376L376 435z" fill="url(#front)" stroke="#222" strokeWidth="2" strokeDasharray="8 2" />
    <path d="M366 321L372 433" stroke="#222" strokeWidth="2" />
    <ellipse cx="525" cy="236" rx="44" ry="13" transform="rotate(-3 525 236)" fill="url(#nut)" stroke="#222" strokeWidth="2" />
    <path d="M444 368h18l3 56c-6 5-14 4-19 0z" fill="url(#nut)" stroke="#222" strokeWidth="1.500" /><ellipse cx="453" cy="368" rx="9" ry="4" fill="#d88300" stroke="#222" />
    <path d="M740 319h18l4 56c-6 5-14 4-19 0z" fill="url(#nut)" stroke="#222" strokeWidth="1.500" /><ellipse cx="749" cy="319" rx="9" ry="4" fill="#d88300" stroke="#222" />
    <ellipse cx="245" cy="398" rx="24" ry="7" transform="rotate(-4 245 398)" fill="#a87a10" stroke="#222" /><ellipse cx="256" cy="397" rx="13" ry="5" fill="#0be010" />
    <ellipse cx="851" cy="341" rx="25" ry="7" transform="rotate(-4 851 341)" fill="#a87a10" stroke="#222" /><ellipse cx="862" cy="339" rx="13" ry="5" fill="#0be010" />

    {/* left clamp */}
    <Bolt x={110} y={256} w={40} h={72} />
    <Hex x={91} y={240} w={70} h={22} top={6} />
    <Bolt x={218} y={230} w={46} h={26} />
    <Spring x={221} y={256} h={98} />
    <path d="M50 205L70 168L180 160L330 152L400 165L380 207L315 192z" fill="#ffb400" stroke="#222" strokeWidth="2" />
    <path d="M50 205L315 192L380 207L384 248L288 253L285 233L50 242z" fill="#dc8400" stroke="#222" strokeWidth="2" />
    <path d="M380 207L400 165L402 208L384 248z" fill="#b87000" stroke="#222" strokeWidth="2" />
    <path d="M333 154L316 192M391 166L374 204" stroke="#222" strokeWidth="2.500" />
    <Hex x={79} y={162} w={81} h={22} top={9} />
    <ellipse cx="238" cy="177" rx="47" ry="11" fill="#d88300" stroke="#222" strokeWidth="2" />
    <Hex x={190} y={130} w={86} h={40} top={10} />
    <Bolt x={207} y={106} w={48} h={28} />
    <ellipse cx="231" cy="107" rx="24" ry="7" fill="#ffb400" stroke="#222" strokeWidth="2" /><path d="M207 133h22" stroke="#0be010" strokeWidth="4" />

    {/* right clamp */}
    <Bolt x={890} y={182} w={38} h={72} />
    <Hex x={869} y={166} w={73} h={18} top={6} />
    <Bolt x={795} y={178} w={46} h={28} />
    <Spring x={797} y={204} h={100} />
    <path d="M626 158L684 130L765 115L940 90L987 115L737 160L682 183z" fill="#ffb400" stroke="#222" strokeWidth="2" />
    <path d="M682 183L737 160L987 115L988 148L772 192V217L686 230z" fill="#dc8400" stroke="#222" strokeWidth="2" />
    <path d="M626 158L682 183L686 230L627 192z" fill="#d07d00" stroke="#222" strokeWidth="2" />
    <path d="M684 130L737 160M632 156L686 180" stroke="#222" strokeWidth="2.500" />
    <Hex x={858} y={88} w={82} h={22} top={9} />
    <ellipse cx="810" cy="127" rx="48" ry="11" fill="#d88300" stroke="#222" strokeWidth="2" />
    <Hex x={763} y={82} w={87} h={36} top={10} />
    <Bolt x={781} y={56} w={48} h={28} />
    <ellipse cx="805" cy="58" rx="24" ry="7" fill="#ffb400" stroke="#222" strokeWidth="2" /><path d="M780 85h24" stroke="#0be010" strokeWidth="4" />

    {/* work coordinate system */}
    <path d="M531 297L545 350L543 444L538 444L526 350z" fill="#6f86d8" /><path d="M531 297L545 350L534 352z" fill="#9db0f0" />
    <path d="M558 458L664 431L706 434L664 446z" fill="#eeaaa0" stroke="#c08080" strokeWidth="2" /><path d="M664 431v15" stroke="#a04040" strokeWidth="2" />
    <path d="M493 422L522 430L543 457L508 443z" fill="#8cc890" stroke="#5a9a70" strokeWidth="2" />
    <g fontFamily="'Open Sans', sans-serif" fontSize="40">
      <text x="545" y="291" fill="#2f48e6">ZC</text>
      <text x="664" y="417" fill="#d9423a">XC</text>
      <text x="498" y="416" fill="#3f9a3c">YC</text>
    </g>
  </svg>
);

const Triad = () => (
  <svg width="120" height="90" viewBox="0 0 360 270" fill="none" className="absolute bottom-[47px] left-6">
    <path d="M94 120L165 106L192 122L200 197L128 210L97 190z" fill="#d2d3d5" stroke="#aaa" strokeWidth="3" />
    <path d="M94 120L125 134L192 122M165 106L173 183L200 197M173 183L98 192M125 134L128 210" stroke="#b0b1b3" strokeWidth="3" />
    <path d="M124 206L90 188" stroke="#2c9a2c" strokeWidth="5" /><path d="M82 182l22 4-10 12z" fill="#1c8a1c" />
    <path d="M124 212L222 196" stroke="#c83232" strokeWidth="5" /><path d="M216 186L250 191L220 203z" fill="#d83030" />
    <path d="M123 204L115 112" stroke="#1440d8" strokeWidth="7" /><path d="M103 116L112 84L125 114z" fill="#1030d0" />
    <circle cx="123" cy="211" r="13" fill="#b4b4b6" /><circle cx="120" cy="206" r="6" fill="#ececec" />
    <g fontFamily="'Open Sans', sans-serif" fontSize="36">
      <text x="101" y="80" fill="#3050f0">Z</text>
      <text x="69" y="192" fill="#2c9a2c">Y</text>
      <text x="253" y="200" fill="#e03a3a">X</text>
    </g>
  </svg>
);

const imeButton = 'flex w-6 items-center justify-center';

const InputMethodBar = () => (
  <div className="absolute bottom-[71px] right-0 flex h-[26px] items-center border-y border-[#b5cbe0] bg-white text-[#0a6fd8]">
    <Svg w={32} h={31} className="-ml-2.5">
      <path d="M3 5L24 0q3 0 4 3l4 20q0 4-3 5l-21 3q-4 0-5-3L0 9q0-3 3-4z" fill="#f2551e" />
      <path d="M25 8C18 4 6 7 7 12s17 2 17 7-12 7-19 3" stroke="#fff" strokeWidth="4.500" />
    </Svg>
    <button className={`text-sm font-bold leading-5 ${imeButton}`}>中</button>
    <button aria-label="标点" className={imeButton}><Svg w={14} h={14}><circle cx="4" cy="4" r="2" stroke="currentColor" strokeWidth="1.500" /><circle cx="10" cy="8" r="2" fill="currentColor" /><path d="M12 8c0 3-1 4-3 5" stroke="currentColor" strokeWidth="1.500" /></Svg></button>
    <button aria-label="语音" className={imeButton}><FaMicrophone size={15} /></button>
    <button aria-label="键盘" className={imeButton}><FaKeyboard size={15} /></button>
    <button aria-label="皮肤" className={`relative text-[#a873e8] ${imeButton}`}>
      <FaTshirt size={15} />
      <span className="absolute right-0 -top-1 h-1.5 w-1.5 rounded-full bg-[#ff4a28]" />
    </button>
    <button aria-label="游戏" className={imeButton}>
      <Svg w={16} h={14}>
        <path d="M4 0h8c3 0 4 3 4 5v4H0V5c0-2 1-5 4-5z" fill="currentColor" /><path d="M1 9l4 0-2 4H1zM15 9h-4l2 4h2z" fill="currentColor" />
        <path d="M5 2.500v5M2.500 5h5" stroke="#fff" strokeWidth="1.500" /><circle cx="11" cy="6" r="1" fill="#fff" /><circle cx="13" cy="3.500" r="1" fill="#fff" />
      </Svg>
    </button>
    <button aria-label="工具箱" className={imeButton}><Svg w={14}><path d="M1 1h5v5H1zM1 8h5v5H1zM8 8h5v5H8z" fill="currentColor" stroke="currentColor" strokeLinejoin="round" /><circle cx="10.500" cy="3.500" r="2.200" stroke="currentColor" strokeWidth="1.800" /></Svg></button>
    <button aria-label="设置" className={imeButton}><Svg w={14}><path d="M7 0l2 2h3v3l2 2-2 2v3H9l-1 2V8l1.500-2L7 4 4.500 6 6 8v6l-1-2H2V9L0 7l2-2V2h3z" fill="currentColor" /></Svg></button>
  </div>
);

const Viewport = () => (
  <main className="flex min-w-0 flex-1 flex-col">
    <div className="flex h-[23px] shrink-0 border-b-2 border-[#54a0b8]">
      <div className="flex items-center gap-1 bg-[#54a0b8] px-[7px] text-xs text-white">
        <Svg w={15}><path d="M1 3l4-2 3 1v6l5-2 2 2v3l-6 4-8-3z" fill="#2a56d8" stroke="#12308c" /><path d="M1 3l4-2 3 1-4 2zM8 8l5-2 2 2-5 3z" fill="#8fb4fa" /></Svg>
        <a href="#part">JK泵体车床夹具.prt</a>
        <button aria-label="关闭标签" className="ml-1"><Svg w={9}><path d="M1 1l7 7M8 1L1 8" stroke="#fff" strokeWidth="2.200" /></Svg></button>
      </div>
    </div>
    <div className="relative flex-1 overflow-hidden bg-[linear-gradient(#b5b6b7,#cfd0d1_37%,#e0e1e2_66%,#e6e7e9_82%,#e7e8ea)]">
      <Fixture />
      <Triad />
      <InputMethodBar />
    </div>
  </main>
);

const App = () => (
  <div className="flex h-screen flex-col overflow-hidden bg-white font-['Open_Sans','Noto_Sans_CJK_SC',sans-serif] text-[#1a1a1a]">
    <TitleBar />
    <TabBar />
    <Ribbon />
    <SelectionBar />
    <div className="flex min-h-0 flex-1">
      <Rail />
      <Navigator />
      <Viewport />
    </div>
  </div>
);

export default App;
